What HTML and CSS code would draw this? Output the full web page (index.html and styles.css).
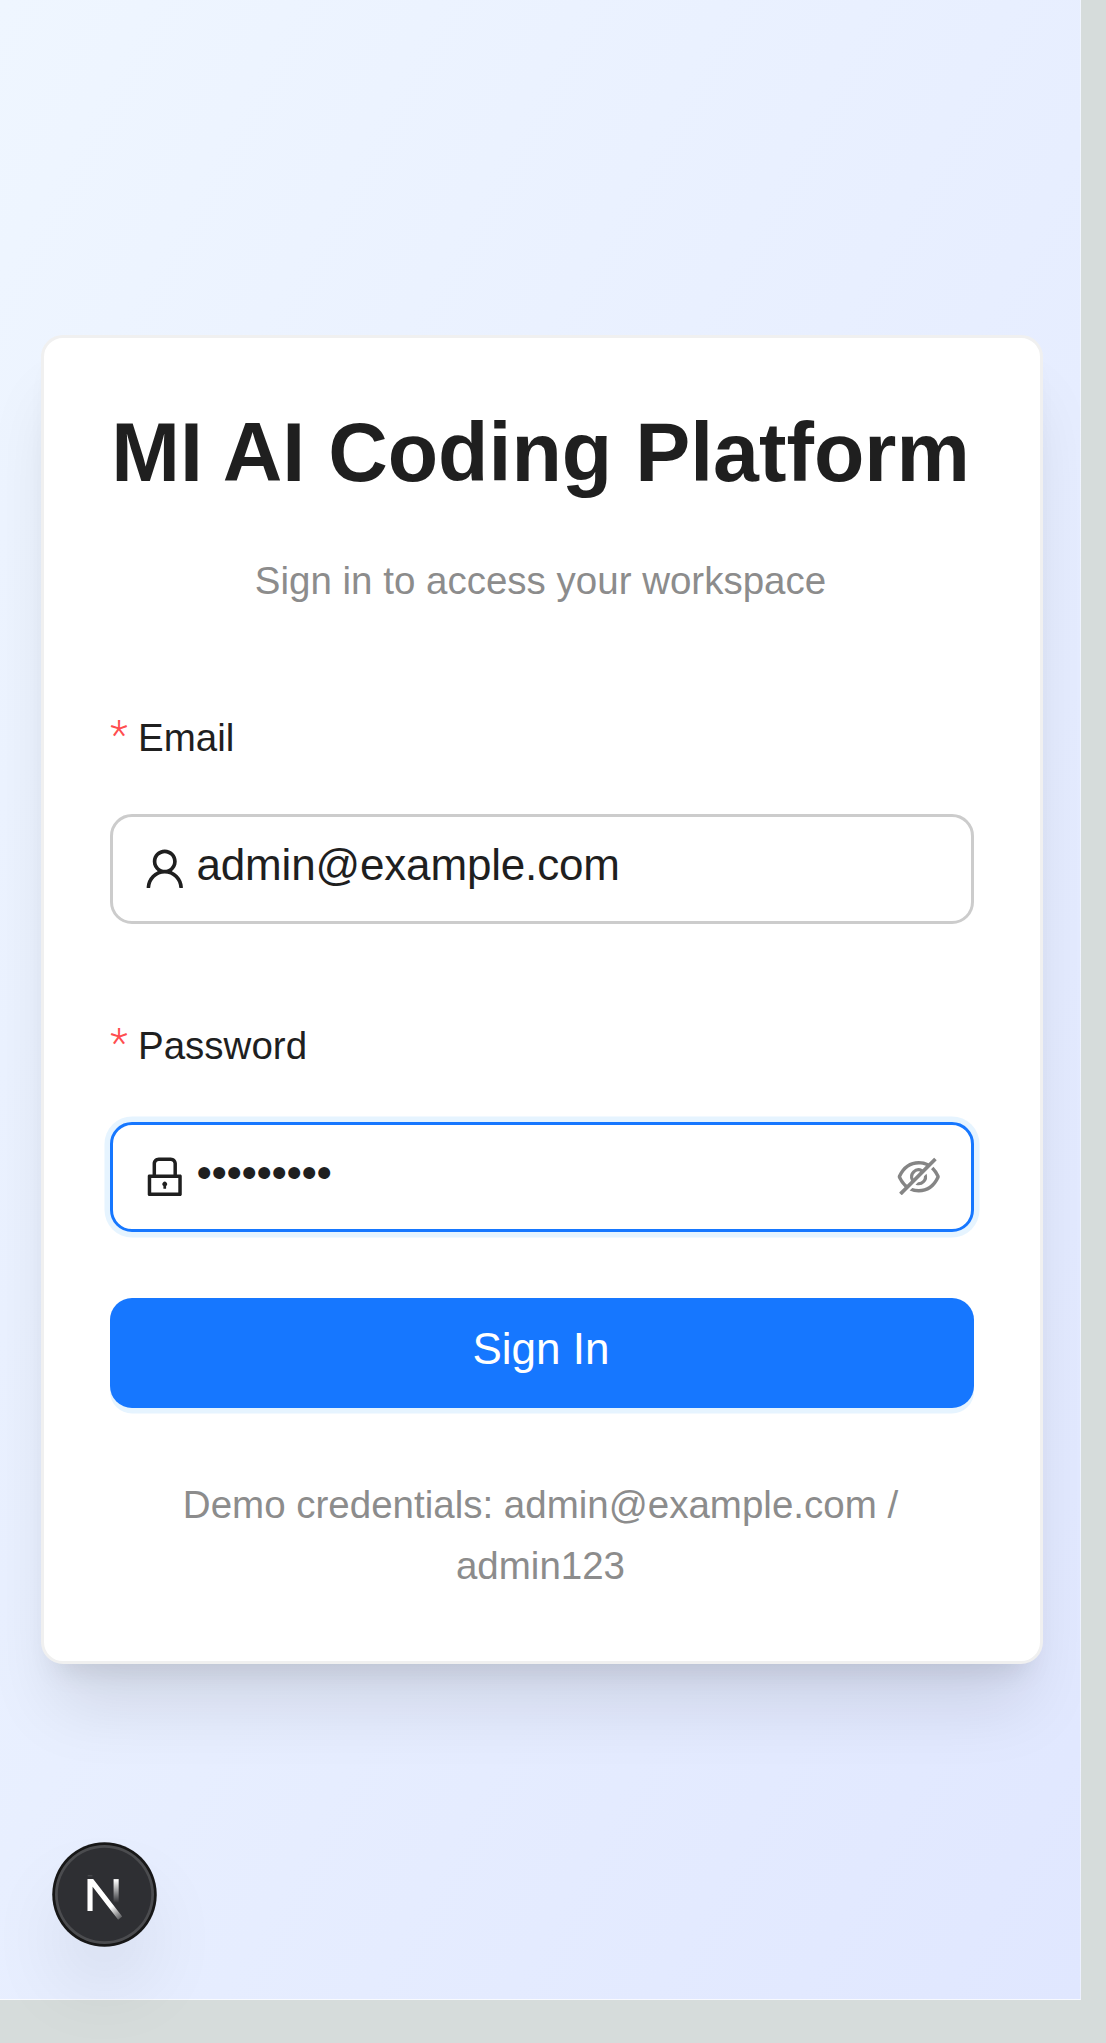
FILE: index.html
```
<!DOCTYPE html>
<html lang="en">
<head>
<meta charset="utf-8">
<title>MI AI Coding Platform</title>
<link rel="stylesheet" href="styles.css">
</head>
<body>
<main class="page">
  <section class="card">
    <h1 class="title">MI AI Coding Platform</h1>
    <p class="subtitle">Sign in to access your workspace</p>

    <div class="label"><span class="required">*</span><span>Email</span></div>
    <div class="field">
      <svg class="icon" viewBox="0 0 1024 1024"><path d="M858.5 763.6a374 374 0 00-80.6-119.5 375.63 375.63 0 00-119.5-80.6c-.4-.2-.8-.3-1.2-.5C719.5 518 760 444.7 760 362c0-137-111-248-248-248S264 225 264 362c0 82.7 40.5 156 102.8 201.1-.4.2-.8.3-1.2.5-44.8 18.9-85 46-119.5 80.6a375.63 375.63 0 00-80.6 119.5A371.7 371.7 0 00136 901.8a8 8 0 008 8.2h60c4.4 0 7.9-3.5 8-7.8 2-77.2 33-149.5 87.8-204.3 56.7-56.7 132-87.9 212.2-87.9s155.5 31.2 212.2 87.9C779 752.7 810 825 812 902.2c.1 4.4 3.6 7.8 8 7.8h60a8 8 0 008-8.2c-1-47.8-10.9-94.3-29.5-138.2zM512 534c-45.9 0-89.1-17.9-121.6-50.4S340 407.9 340 362c0-45.9 17.9-89.1 50.4-121.6S466.1 190 512 190s89.1 17.9 121.6 50.4S684 316.1 684 362c0 45.9-17.9 89.1-50.4 121.6S557.9 534 512 534z"/></svg>
      <span class="value">admin@example.com</span>
    </div>

    <div class="label label-password"><span class="required">*</span><span>Password</span></div>
    <div class="field focused">
      <svg class="icon" viewBox="0 0 1024 1024"><path d="M832 464h-68V240c0-70.7-57.3-128-128-128H388c-70.7 0-128 57.3-128 128v224h-68c-17.7 0-32 14.3-32 32v384c0 17.7 14.3 32 32 32h640c17.7 0 32-14.3 32-32V496c0-17.7-14.3-32-32-32zM332 240c0-30.9 25.1-56 56-56h248c30.9 0 56 25.1 56 56v224H332V240zm460 600H232V536h560v304zM484 701v53c0 4.4 3.6 8 8 8h40c4.4 0 8-3.6 8-8v-53a48.01 48.01 0 10-56 0z"/></svg>
      <span class="value dots">•••••••••</span>
      <svg class="icon eye" viewBox="0 0 1024 1024"><path d="M942.2 486.2Q889.47 375.11 816.7 305l-50.88 50.88C807.31 395.53 843.45 447.4 874.7 512 791.5 684.2 673.4 766 512 766q-72.67 0-133.87-22.38L323 798.75Q408 838 512 838q288.3 0 430.2-300.3a60.29 60.29 0 000-51.5zm-63.57-320.64L836 122.88a8 8 0 00-11.32 0L715.31 232.2Q624.86 186 512 186q-288.3 0-430.2 300.3a60.3 60.3 0 000 51.5q56.69 119.4 136.5 191.41L112.48 835a8 8 0 000 11.31L155.17 889a8 8 0 0011.31 0l712.15-712.12a8 8 0 000-11.32zM149.3 512C232.6 339.8 350.7 258 512 258c54.54 0 104.13 9.36 149.12 28.39l-70.3 70.3a176 176 0 00-238.13 238.13l-83.42 83.42C223.1 637.49 183.3 582.28 149.3 512zm246.7 0a112.11 112.11 0 01146.2-106.69L401.31 546.2A112 112 0 01396 512z"/><path d="M508 624c-3.46 0-6.87-.16-10.25-.47l-52.82 52.82a176.09 176.09 0 00227.42-227.42l-52.82 52.82c.31 3.38.47 6.79.47 10.25a111.94 111.94 0 01-112 112z"/></svg>
    </div>

    <button class="submit">Sign In</button>
    <p class="hint">Demo credentials: admin@example.com / admin123</p>
  </section>
</main>

<div class="dev-badge">
  <svg viewBox="0 0 36 36" fill="none">
    <defs>
      <linearGradient id="diag" x1="9.96" y1="11.12" x2="14.2" y2="16.6" gradientUnits="userSpaceOnUse"><stop stop-color="#fff"/><stop offset="1" stop-color="#fff" stop-opacity="0"/></linearGradient>
      <linearGradient id="stem" x1="11.82" y1="1.4" x2="11.8" y2="9.63" gradientUnits="userSpaceOnUse"><stop stop-color="#fff"/><stop offset="1" stop-color="#fff" stop-opacity="0"/></linearGradient>
      <clipPath id="trim"><path d="M0 1H18V18H0z"/></clipPath>
    </defs>
    <g transform="translate(10.4 11.4)">
      <path d="M13.3 15.2 2.34 1V12.6" stroke="url(#diag)" stroke-width="1.86" clip-path="url(#trim)"/>
      <path d="M11.825 1V13.1" stroke="url(#stem)" stroke-width="1.86"/>
      <path d="M1.5 -.2H3.2" stroke="#fff" stroke-opacity=".2" stroke-width=".3"/>
    </g>
  </svg>
</div>
</body>
</html>
```
FILE: styles.css
```
* { box-sizing: border-box; }

body {
  margin: 0;
  height: 2043px;
  overflow: hidden;
  background: #d6dcdb;
  font-family: "Liberation Sans", Arial, sans-serif;
  color: #1f1f1f;
}

.page {
  width: 1081px;
  height: 2000px;
  padding: 335.25px 37.25px 0 41.25px;
  background: linear-gradient(to bottom right, #eff6ff, #e0e7ff) border-box;
  border: 0 solid rgba(255, 255, 255, .4);
  border-right-width: 1px;
  border-bottom: 1px solid rgba(255, 255, 255, .75);
  overflow: hidden;
}

.card {
  height: 1328.75px;
  padding: 66px;
  background: #fff;
  border: 3px solid #f0f0f0;
  border-radius: 22px;
  box-shadow: 0 55px 69px -14px rgba(0, 0, 0, .1), 0 22px 27.5px -16.5px rgba(0, 0, 0, .1);
}

.title {
  margin: 0 0 0 -3px;
  height: 96px;
  line-height: 96px;
  font-size: 82.5px;
  text-align: center;
  white-space: nowrap;
}

.subtitle {
  margin: 50.5px 0 97px -3px;
  font-size: 38.5px;
  line-height: 60px;
  text-align: center;
  color: #8c8c8c;
}

.label {
  display: flex;
  gap: 11px;
  height: 60px;
  margin-bottom: 46.25px;
  font-size: 38.5px;
  line-height: 60px;
}

.label-password { margin-top: 91.75px; }

.required {
  width: 16.75px;
  margin-top: -2.5px;
  color: #ff4d4f;
  font-family: Roboto, sans-serif;
  font-size: 41px;
  font-weight: 300;
}

.field {
  display: flex;
  align-items: center;
  height: 110px;
  padding: 0 27px 0 26.5px;
  border: 3px solid #ccc;
  border-radius: 22px;
  font-size: 44px;
}

.field.focused {
  border-color: #1677ff;
  box-shadow: 0 0 0 5.5px rgba(5, 145, 255, .1);
}

.icon {
  flex: none;
  width: 49.5px;
  height: 49.5px;
  fill: #1f1f1f;
}

.eye { fill: #858585; }

.value {
  flex: 1;
  margin-left: 7.25px;
  padding-bottom: 8px;
  letter-spacing: -.17px;
}

.dots { letter-spacing: -.4px; }

.submit {
  display: block;
  width: 100%;
  height: 110px;
  margin-top: 66px;
  padding: 0 2px 8px 0;
  border: 0;
  border-radius: 22px;
  background: #1677ff;
  box-shadow: 0 5.5px 0 rgba(5, 145, 255, .1);
  color: #fff;
  font: 44px "Liberation Sans", Arial, sans-serif;
}

.hint {
  margin: 66px 0 0 -3px;
  font-size: 38.5px;
  line-height: 61px;
  text-align: center;
  color: #8c8c8c;
}

.dev-badge {
  position: absolute;
  left: 55px;
  top: 1845px;
  width: 99px;
  height: 99px;
  border-radius: 50%;
  background: #2e2f33;
  box-shadow: 0 0 0 2.75px #171717, inset 0 0 0 2.75px rgba(255, 255, 255, .14), 0 44px 88px -22px rgba(0, 0, 0, .24);
}

.dev-badge svg { display: block; width: 99px; height: 99px; }
```
